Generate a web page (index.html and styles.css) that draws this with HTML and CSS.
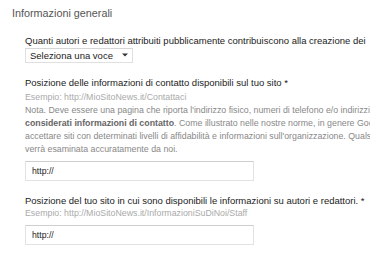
FILE: index.html
```html
<!DOCTYPE html>
<html lang="it">
<head>
<meta charset="utf-8">
<title>Informazioni generali</title>
<link rel="stylesheet" href="styles.css">
</head>
<body>
<div class="page">
  <h2 class="section-title">Informazioni generali</h2>
  <div class="fields">
    <div class="field">
      <div class="label">Quanti autori e redattori attribuiti pubblicamente contribuiscono alla creazione dei</div>
      <div class="select">
        <span class="select-text">Seleziona una voce</span>
        <svg class="select-arrow" width="6" height="4" viewBox="0 0 6 4"><path d="M0 0.5H6L3 3.5Z" fill="#333"/></svg>
      </div>
    </div>
    <div class="field">
      <div class="label">Posizione delle informazioni di contatto disponibili sul tuo sito *</div>
      <div class="hint">Esempio: http://MioSitoNews.it/Contattaci</div>
      <div class="note">Nota. Deve essere una pagina che riporta l'indirizzo fisico, numeri di telefono e/o indirizzi<br><b>considerati informazioni di contatto</b>. Come illustrato nelle nostre norme, in genere Google<br>accettare siti con determinati livelli di affidabilità e informazioni sull'organizzazione. Qualsiasi<br>verrà esaminata accuratamente da noi.</div>
      <div class="input">http://</div>
    </div>
    <div class="field">
      <div class="label">Posizione del tuo sito in cui sono disponibili le informazioni su autori e redattori. *</div>
      <div class="hint hint-tight">Esempio: http://MioSitoNews.it/InformazioniSuDiNoi/Staff</div>
      <div class="input">http://</div>
    </div>
  </div>
</div>
</body>
</html>
```
FILE: styles.css
```css
html, body {
  margin: 0;
  padding: 0;
  background: #fff;
  overflow: hidden;
}
body {
  font-family: "Liberation Sans", Arial, sans-serif;
  font-size: 9.5px;
  color: #222;
}
.page {
  padding: 6px 0 0 12px;
  width: 600px;
}
.section-title {
  margin: 0;
  font-weight: normal;
  font-size: 10.8px;
  line-height: 14px;
  color: #555;
}
.fields {
  padding-left: 13px;
}
.field {
  margin-top: 13.5px;
}
.label {
  line-height: 13px;
  white-space: nowrap;
  color: #222;
}
.select {
  display: inline-flex;
  align-items: center;
  gap: 9px;
  margin-top: 1px;
  height: 13px;
  padding: 0 4px;
  border: 1px solid #e0e0e0;
  border-top-color: #d6d6d6;
  background: #fff;
  font-size: 9.5px;
  color: #222;
}
.select-arrow {
  display: block;
}
.hint {
  margin-top: 2px;
  font-size: 8.8px;
  line-height: 13px;
  color: #aaa;
  white-space: nowrap;
}
.hint-tight {
  margin-top: 0;
}
.note {
  font-size: 8.8px;
  line-height: 13px;
  color: #888;
  white-space: nowrap;
}
.note b {
  color: #666;
}
.input {
  margin-top: 4.5px;
  box-sizing: border-box;
  width: 229px;
  height: 20px;
  padding: 0 6px;
  font-size: 8.7px;
  line-height: 18px;
  border: 1px solid #e2e2e2;
  border-top-color: #cfcfcf;
  color: #222;
}
```
